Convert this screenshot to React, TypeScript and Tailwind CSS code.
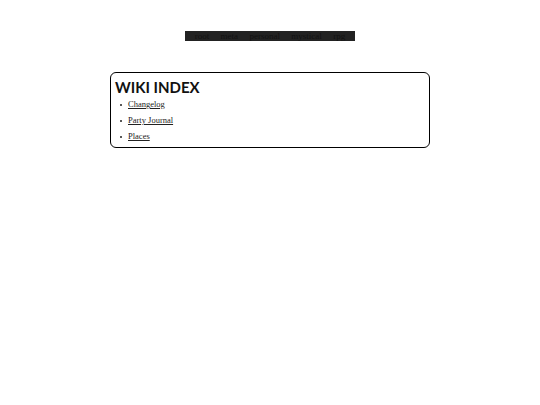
const links = ["Changelog", "Party Journal", "Places"];
const nav = ["root", "meta", "personal", "mystical", "rpg"];

export default function App() {
  return (
    <div className="min-h-[405px] w-[540px] bg-white">
      {/* top nav */}
      <div className="flex justify-center pt-[31px]">
        <nav className="flex h-[10px] w-[170px] items-center justify-around bg-[#222222] px-[4px] font-['Liberation_Serif',serif] text-[9px] leading-none text-[#111111]">
          {nav.map((n) => (
            <a key={n} href="#">
              {n}
            </a>
          ))}
        </nav>
      </div>

      {/* wiki index */}
      <div className="mx-auto mt-[31px] w-[320px] rounded-[6px] border border-black px-[4px] pb-[6px] pt-[4px]">
        <h1 className="font-['Lato',sans-serif] text-[15px] font-bold leading-[20px] text-[#111111]">
          WIKI INDEX
        </h1>
        <ul className="mt-[2px] flex flex-col gap-[6px] pl-[5px] font-['Liberation_Serif',serif] text-[8.5px] leading-[10px]">
          {links.map((l) => (
            <li key={l} className="flex items-center">
              <span className="mr-[6px] mt-[1px] h-[2px] w-[2px] rounded-full bg-[#222222]" />
              <a href="#" className="text-[#222222] underline">
                {l}
              </a>
            </li>
          ))}
        </ul>
      </div>
    </div>
  );
}
